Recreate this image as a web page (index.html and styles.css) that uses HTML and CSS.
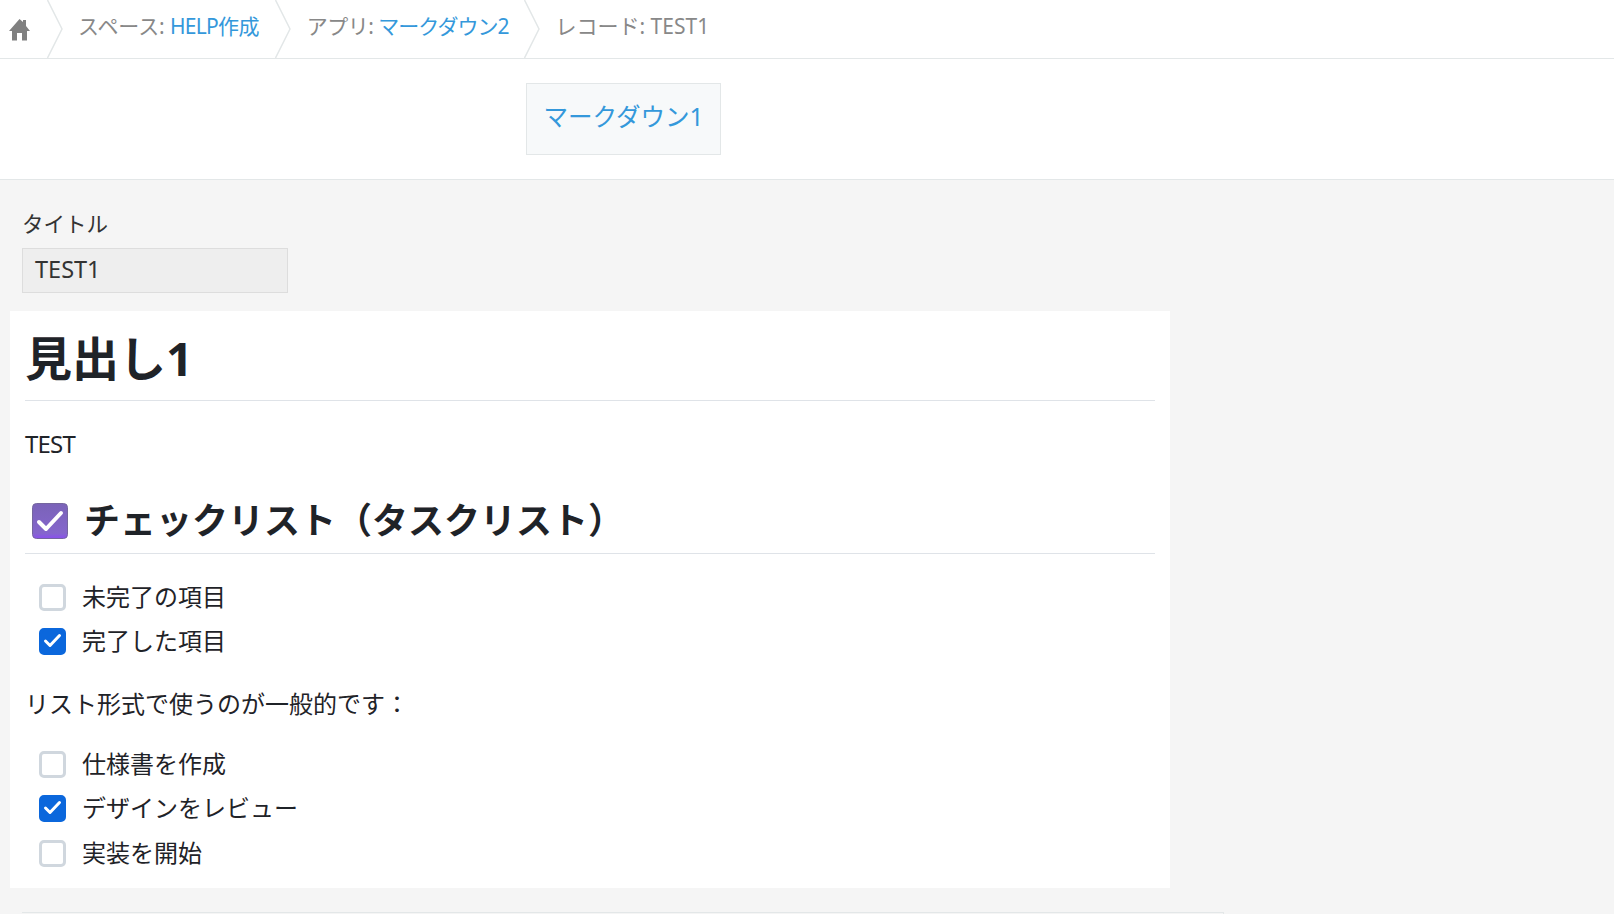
FILE: index.html
```html
<!DOCTYPE html>
<html lang="ja">
<head>
    <meta charset="UTF-8">
    <meta name="viewport" content="width=device-width, initial-scale=1.0">
    <title>レコード: TEST1</title>
    <link rel="stylesheet" href="styles.css">
</head>
<body>
<div class="page">

    <!-- パンくず -->
    <nav class="breadcrumb">
        <a class="crumb-home" href="#">
            <svg width="22" height="22" viewBox="0 0 22 22"><path fill="#808080" d="M10.500 0 14 3V1h3v6l4 5h-3v9.500h-5V14H8v7.500H3V12H0z"/></svg>
        </a>
        <svg class="crumb-sep" width="16" height="58" viewBox="0 0 16 58"><path fill="none" stroke="#e3e7e8" stroke-width="1.500" d="M0.500 0 15 29 0.500 58"/></svg>
        <span class="crumb">スペース: <a class="crumb-link" href="#">HELP作成</a></span>
        <svg class="crumb-sep" width="16" height="58" viewBox="0 0 16 58"><path fill="none" stroke="#e3e7e8" stroke-width="1.500" d="M0.500 0 15 29 0.500 58"/></svg>
        <span class="crumb crumb-app">アプリ: <a class="crumb-link crumb-link-kana" href="#">マークダウン2</a></span>
        <svg class="crumb-sep" width="16" height="58" viewBox="0 0 16 58"><path fill="none" stroke="#e3e7e8" stroke-width="1.500" d="M0.500 0 15 29 0.500 58"/></svg>
        <span class="crumb crumb-record">レコード: TEST1</span>
    </nav>

    <!-- タブ -->
    <div class="tabs">
        <a class="tab" href="#">マークダウン1</a>
    </div>

    <main class="content">
        <div class="field">
            <div class="field-label">タイトル</div>
            <div class="field-value">TEST1</div>
        </div>

        <!-- マークダウン表示 -->
        <article class="markdown">
            <h1>見出し1</h1>
            <p class="para-first">TEST</p>
            <h2>
                <svg class="emoji" width="36" height="36" viewBox="0 0 36 36">
                    <defs>
                        <linearGradient id="emojiFill" x1="0" y1="0" x2="0" y2="1">
                            <stop offset="0" stop-color="#7a63b8"/>
                            <stop offset="0.850" stop-color="#8566cc"/>
                            <stop offset="1" stop-color="#8a4ff0"/>
                        </linearGradient>
                    </defs>
                    <rect x="0.500" y="0.500" width="35" height="35" rx="4" fill="url(#emojiFill)" stroke="#75669f"/>
                    <path fill="none" stroke="#fff" stroke-width="4" stroke-linecap="round" stroke-linejoin="round" d="M7 19l7 7L29 10"/>
                </svg>
                チェックリスト（タスクリスト）
            </h2>
            <ul class="tasks tasks-first">
                <li><span class="box"></span>未完了の項目</li>
                <li><span class="box checked"><svg width="19" height="19" viewBox="0 0 19 19"><path d="M2.500 9l4.500 4.500 9.500-10"/></svg></span>完了した項目</li>
            </ul>
            <p class="para-list">リスト形式で使うのが一般的です：</p>
            <ul class="tasks tasks-second">
                <li><span class="box"></span>仕様書を作成</li>
                <li><span class="box checked"><svg width="19" height="19" viewBox="0 0 19 19"><path d="M2.500 9l4.500 4.500 9.500-10"/></svg></span>デザインをレビュー</li>
                <li><span class="box"></span>実装を開始</li>
            </ul>
        </article>

        <div class="next-box"></div>
    </main>

</div>
</body>
</html>
```

FILE: styles.css
```css
/* 全体 */
html, body {
    margin: 0;
    padding: 0;
}

body {
    font-family: "Noto Sans", "Noto Sans CJK JP", sans-serif;
    background-color: #f5f5f5;
    color: #1f2328;
}

a {
    text-decoration: none;
    color: #3498db;
}

.page {
    height: 914px;
    overflow: hidden;
}

/* パンくず */
.breadcrumb {
    display: flex;
    align-items: center;
    height: 58px;
    background-color: #fff;
    border-bottom: 1px solid #e3e7e8;
    font-size: 21px;
    color: #888;
}

.crumb-home {
    display: flex;
    width: 38px;
    padding-left: 9px;
    margin-top: 2px;
}

.crumb-sep {
    flex-shrink: 0;
}

.crumb {
    padding: 0 16px 8px 15px;
    white-space: nowrap;
    letter-spacing: -0.1px;
}

.crumb-app {
    padding-left: 16px;
    letter-spacing: -0.5px;
}

.crumb-record {
    letter-spacing: 0;
}

.crumb-link {
    letter-spacing: -0.7px;
}

.crumb-link-kana {
    letter-spacing: -1px;
}

/* タブ */
.tabs {
    height: 96px;
    padding: 24px 0 0 526px;
    background-color: #fff;
    border-bottom: 1px solid #e3e7e8;
}

.tab {
    display: flex;
    align-items: center;
    justify-content: center;
    box-sizing: border-box;
    width: 195px;
    height: 72px;
    background-color: #f7f9fa;
    border: 1px solid #e3e7e8;
    font-size: 24.500px;
    padding-bottom: 8px;
}

/* フィールド */
.content {
    padding: 0 0 0 10px;
}

.field {
    padding: 29px 0 0 12px;
}

.field-label {
    font-size: 21.500px;
    line-height: 30px;
    color: #333;
}

.field-value {
    box-sizing: border-box;
    width: 266px;
    height: 45px;
    margin-top: 9px;
    padding: 4px 12px 0;
    line-height: 32px;
    font-size: 23.500px;
    background-color: #eee;
    border: 1px solid #ddd;
    color: #333;
}

/* マークダウン */
.markdown {
    box-sizing: border-box;
    width: 1160px;
    height: 577px;
    margin-top: 18px;
    padding: 17px 15px 0;
    background-color: #fff;
}

.markdown h1 {
    margin: 0;
    padding-bottom: 12px;
    font-size: 47px;
    line-height: 60px;
    font-weight: 700;
    border-bottom: 1px solid #dfe3e8;
}

.markdown h2 {
    display: flex;
    align-items: center;
    margin: 36px 0 0;
    padding-bottom: 10px;
    font-size: 36px;
    line-height: 45px;
    font-weight: 700;
    border-bottom: 1px solid #dfe3e8;
}

.emoji {
    margin: 0 16px 0 7px;
}

.markdown p {
    margin: 0;
    font-size: 24px;
    line-height: 36px;
}

.para-first {
    margin-top: 25px !important;
    letter-spacing: -0.8px;
}

.para-list {
    margin-top: 22px !important;
}

/* タスクリスト */
.tasks {
    list-style: none;
    margin: 0;
    padding: 0 0 0 14px;
    font-size: 24px;
}

.tasks-first {
    margin-top: 21px;
}

.tasks-second {
    margin-top: 20px;
}

.tasks li {
    display: flex;
    align-items: center;
    box-sizing: border-box;
    height: 44.500px;
    padding-bottom: 4px;
}

.box {
    display: flex;
    align-items: center;
    justify-content: center;
    box-sizing: border-box;
    width: 27px;
    height: 27px;
    margin: 4px 16px 0 0;
    background-color: #fff;
    border: 3px solid #d0d7de;
    border-radius: 5px;
}

.box.checked {
    background-color: #0b67dc;
    border-color: #0b67dc;
}

.box svg {
    flex-shrink: 0;
}

.box svg path {
    fill: none;
    stroke: #fff;
    stroke-width: 3;
    stroke-linecap: round;
    stroke-linejoin: round;
}

/* 次のフィールド */
.next-box {
    box-sizing: border-box;
    width: 1202px;
    height: 40px;
    margin: 24px 0 0 12px;
    border: 1px solid #e3e7e8;
    border-left: none;
}
```
